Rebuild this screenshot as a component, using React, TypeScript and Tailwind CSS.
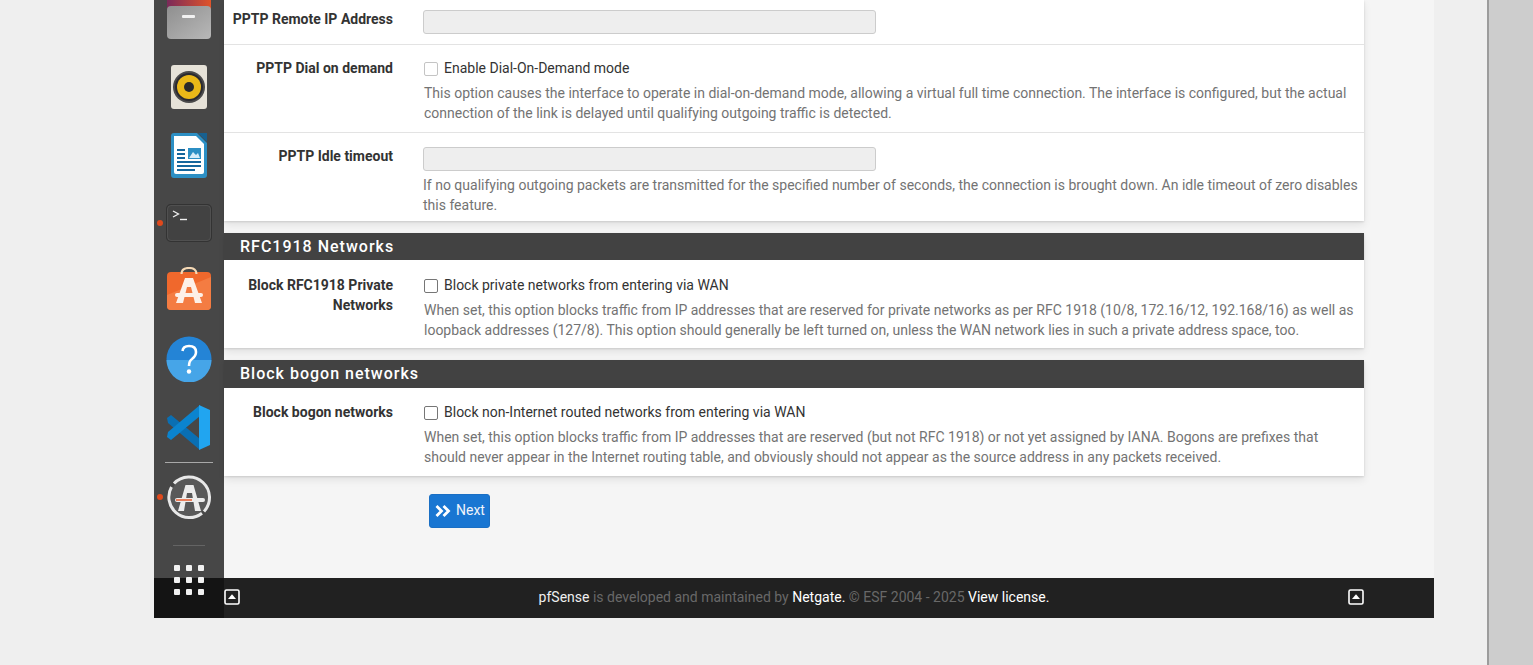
const F = "[font-family:Roboto,'Liberation_Sans',sans-serif]";
const PANEL = "bg-white shadow-[0_4px_8px_rgba(0,0,0,0.08),0_1px_2px_rgba(0,0,0,0.12)]";

function Row({ label, children, lp = "pt-[13px]", last }: { label: React.ReactNode; children: React.ReactNode; lp?: string; last?: boolean }) {
  return (
    <div className={`flex ${last ? "" : "border-b border-[#e3e3e3]"}`}>
      <div className={`w-[169px] shrink-0 text-right font-bold text-[#333] text-[14px] leading-[20px] ${lp}`}>{label}</div>
      <div className="ml-[30px] w-[935px]">{children}</div>
    </div>
  );
}

function Check({ label, dim }: { label: string; dim?: boolean }) {
  return (
    <div className="flex items-center h-[20px]">
      <span className={`w-[14px] h-[14px] rounded-[2px] border bg-white ml-px mt-[2px] ${dim ? "border-[#c4c4c4]" : "border-[#767676]"}`} />
      <span className="ml-[6px] text-[#333]">{label}</span>
    </div>
  );
}

function Help({ children }: { children: React.ReactNode }) {
  return <p className="mt-[5px] ml-px text-[#737373] text-[14px] leading-[20px]">{children}</p>;
}

function Disabled() {
  return <div className="w-[453px] h-[24px] bg-[#eeeeee] border border-[#cccccc] rounded-[3px]" />;
}

function Heading({ children, h }: { children: React.ReactNode; h: string }) {
  return <div className={`${h} bg-[#424242] text-white font-medium text-[16px] leading-[27px] tracking-[1px] pl-[16px]`}>{children}</div>;
}

function UpIcon() {
  return (
    <svg width="16" height="16" viewBox="0 0 16 16" className="mb-[2px]">
      <rect x="1" y="1" width="14" height="14" rx="1.5" fill="none" stroke="#fff" strokeWidth="1.6" />
      <path d="M8 5.2 L12 10 H4 Z" fill="#fff" />
    </svg>
  );
}

function Dock() {
  return (
    <div className="absolute left-0 top-0 bottom-0 w-[70px] bg-[rgba(17,17,17,0.763)] overflow-hidden">
      <svg className="absolute left-[13px] top-[-10px]" width="45" height="50" viewBox="0 0 45 50">
        <defs>
          <linearGradient id="fd" x1="0" y1="0" x2="1" y2="1"><stop offset="0" stopColor="#8f8f8f" /><stop offset="1" stopColor="#b8b8b8" /></linearGradient>
          <linearGradient id="ft" x1="0" y1="0" x2="1" y2="0"><stop offset="0" stopColor="#7a2a5a" /><stop offset="1" stopColor="#e0542a" /></linearGradient>
        </defs>
        <path d="M0 4 q0 -3 3 -3 H20 l5 5 H42 q2 0 2 3 V25 H0 Z" fill="url(#ft)" />
        <rect x="0" y="16" width="44" height="33" rx="4" fill="url(#fd)" />
        <rect x="15" y="25" width="13" height="3" rx="1" fill="#f1f1f1" />
      </svg>
      <svg className="absolute left-[17px] top-[65px]" width="36" height="44" viewBox="0 0 36 44">
        <rect width="36" height="44" rx="3" fill="#e6e2d8" />
        <circle cx="18" cy="22" r="16" fill="#4a4a4a" />
        <circle cx="18" cy="22" r="14" fill="#2a2a30" />
        <circle cx="18" cy="22" r="12" fill="#eab818" />
        <circle cx="18" cy="22" r="5" fill="#2a2a2a" />
      </svg>
      <svg className="absolute left-[17px] top-[133px]" width="36" height="45" viewBox="0 0 36 45">
        <path d="M3 0 H26 L36 10 V42 q0 3 -3 3 H3 q-3 0 -3 -3 V3 q0 -3 3 -3 Z" fill="#2c8fc4" />
        <path d="M3 3 H25 L33 11 V39 q0 2 -2 2 H5 q-2 0 -2 -2 Z" fill="#ffffff" />
        <path d="M27 0 H36 V9 Z" fill="#17608f" />
        <path d="M6 16 h8 v2 h-8 z M6 20 h8 v2 h-8 z M6 24 h8 v2 h-8 z M6 28 h24 v2 h-24 z M6 32 h24 v2 h-24 z M6 36 h18 v2 h-18 z" fill="#15669c" />
        <rect x="17" y="15" width="13" height="11" fill="#2c8fc4" />
        <path d="M18 25 l4 -6 3 3 2 -2 2 5 Z" fill="#d6ecf8" />
      </svg>
      <svg className="absolute left-[12px] top-[204px]" width="46" height="38" viewBox="0 0 46 38">
        <rect x="0.75" y="0.75" width="44.5" height="36.5" rx="4" fill="#424242" stroke="#333333" strokeWidth="1.5" />
        <rect x="1.5" y="1.5" width="43" height="35" rx="3.5" fill="none" stroke="#5a5a5a" strokeWidth="0.7" />
        <path d="M7 7 L12.5 10 L7 13" fill="none" stroke="#f0f0f0" strokeWidth="1.3" />
        <path d="M14 15.5 H21" stroke="#f0f0f0" strokeWidth="1.4" />
      </svg>
      <div className="absolute left-[3px] top-[220px] w-[6px] h-[6px] rounded-full bg-[#e0491c]" />
      <svg className="absolute left-[13px] top-[267px]" width="45" height="44" viewBox="0 0 45 44">
        <rect x="0" y="5" width="44" height="38" rx="4" fill="#f0682c" />
        <path d="M0 28 L44 10 V39 q0 4 -4 4 H4 q-4 0 -4 -4 Z" fill="#f47c42" />
        <path d="M14.5 7 Q14.5 1 22 1 Q29.5 1 29.5 7" fill="none" stroke="#f5d9b5" strokeWidth="2.2" />
        <path d="M18 11 H26 L35 36 H28 L24 20 H20 L16 36 H9 Z" fill="#fdf0e8" />
        <rect x="8" y="26" width="28" height="4" rx="2" fill="#fdf0e8" />
      </svg>
      <svg className="absolute left-[12px] top-[336px]" width="46" height="46" viewBox="0 0 46 46">
        <circle cx="23" cy="23" r="22.5" fill="#2484d6" />
        <path d="M0.5 24 a22.5 22.5 0 0 0 45 0 Z" fill="#46a5e8" />
        <path d="M16.5 15 Q17 10 23 10 Q30 10 30 16 Q30 20 26 23 Q23 25 23 30" fill="none" stroke="#fff" strokeWidth="2.6" />
        <circle cx="23" cy="35.5" r="2.2" fill="#fff" />
      </svg>
      <svg className="absolute left-[13px] top-[405px]" width="44" height="45" viewBox="0 0 44 45">
        <path d="M0 13 L4 10 L33 34 V45 L1 18 Z" fill="#0a6fb3" />
        <path d="M0 32 L4 35 L33 11 V0 L1 27 Z" fill="#0b84cf" />
        <path d="M32 0 L43 5 V40 L32 45 Z" fill="#21a5f0" />
      </svg>
      <div className="absolute left-[11px] top-[462px] w-[48px] h-px bg-[#a8a8a8]" />
      <svg className="absolute left-[12px] top-[475px]" width="46" height="46" viewBox="0 0 46 46">
        <circle cx="23.5" cy="22" r="19" fill="#595959" />
        <path d="M8 8.5 A20.5 20.5 0 1 1 38 36.5 M36 38.2 A20.5 20.5 0 0 1 5.5 12" fill="none" stroke="#e8e8e8" strokeWidth="3" />
        <path d="M19.5 10 H27.5 L35 36 H29 L26 18 H21 L18 36 H12 Z" fill="#ececec" />
        <rect x="9" y="23" width="30" height="4" rx="2" fill="#ececec" />
        <rect x="10" y="24.3" width="16" height="1.4" fill="#e9501f" />
      </svg>
      <div className="absolute left-[3px] top-[494px] w-[6px] h-[6px] rounded-full bg-[#e0491c]" />
      <div className="absolute left-[19px] top-[545px] w-[32px] h-px bg-[#646464]" />
      <div className="absolute left-[20px] top-[565px] grid grid-cols-3 gap-[6px]">
        {Array.from({ length: 9 }).map((_, i) => (
          <span key={i} className="w-[6px] h-[6px] rounded-[1px] bg-[#f1f1f1]" />
        ))}
      </div>
    </div>
  );
}

export default function App() {
  return (
    <div className={`${F} h-[665px] overflow-hidden bg-[#efefef] flex text-[14px] leading-[20px]`}>
      <div className="relative w-[1280px] ml-[154px] h-[618px] flex flex-col bg-[#f5f5f5]">
        <div className="flex-1 pl-[70px] pr-[70px] min-h-0">
          <div className={PANEL}>
            <Row label="PPTP Remote IP Address" lp="pt-[9px]">
              <div className="pt-[10px] pb-[10px]"><Disabled /></div>
            </Row>
            <Row label="PPTP Dial on demand">
              <div className="pt-[13px] pb-[9px]">
                <Check label="Enable Dial-On-Demand mode" dim />
                <Help>This option causes the interface to operate in dial-on-demand mode, allowing a virtual full time connection. The interface is configured, but the actual connection of the link is delayed until qualifying outgoing traffic is detected.</Help>
              </div>
            </Row>
            <Row label="PPTP Idle timeout" last>
              <div className="pt-[14px] pb-[6px]">
                <Disabled />
                <p className="mt-[4px] text-[#737373]">If no qualifying outgoing packets are transmitted for the specified number of seconds, the connection is brought down. An idle timeout of zero disables this feature.</p>
              </div>
            </Row>
          </div>

          <div className={`mt-[12px] ${PANEL}`}>
            <Heading h="h-[27px]">RFC1918 Networks</Heading>
            <div className="pt-px">
              <Row label={<>Block RFC1918 Private<br />Networks</>} lp="pt-[14px]" last>
                <div className="pt-[14px] pb-[8px]">
                  <Check label="Block private networks from entering via WAN" />
                  <Help>When set, this option blocks traffic from IP addresses that are reserved for private networks as per RFC 1918 (10/8, 172.16/12, 192.168/16) as well as loopback addresses (127/8). This option should generally be left turned on, unless the WAN network lies in such a private address space, too.</Help>
                </div>
              </Row>
            </div>
          </div>

          <div className={`mt-[12px] ${PANEL}`}>
            <Heading h="h-[28px]">Block bogon networks</Heading>
            <Row label="Block bogon networks" lp="pt-[14px]" last>
              <div className="pt-[14px] pb-[9px]">
                <Check label="Block non-Internet routed networks from entering via WAN" />
                <Help>When set, this option blocks traffic from IP addresses that are reserved (but not RFC 1918) or not yet assigned by IANA. Bogons are prefixes that should never appear in the Internet routing table, and obviously should not appear as the source address in any packets received.</Help>
              </div>
            </Row>
          </div>

          <button className="mt-[18px] ml-[205px] w-[61px] h-[34px] bg-[#1976d2] border border-[#1a6fc4] rounded-[3px] flex items-center pl-[5px] pb-[2px] text-[#f0f4fa]">
            <svg width="16" height="14" viewBox="0 0 16 14" fill="none" stroke="#fff" strokeWidth="2.8" className="mt-[2px]">
              <path d="M1.5 2 L6.5 7 L1.5 12 M8.5 2 L13.5 7 L8.5 12" />
            </svg>
            <span className="ml-[5px]">Next</span>
          </button>
        </div>
        <div className="h-[40px] shrink-0 bg-[#212121] flex items-center pl-[70px] pr-[70px]">
          <UpIcon />
          <div className="flex-1 text-center text-[#686868] pb-[2px]">
            <span className="text-[#eeeeee]">pfSense</span> is developed and maintained by <span className="text-[#ffffff]">Netgate.</span> © ESF 2004 - 2025 <span className="text-[#ffffff]">View license.</span>
          </div>
          <UpIcon />
        </div>
        <Dock />
      </div>
      <div className="ml-[53px] w-[2px] h-full bg-[#9c9c9c]" />
      <div className="flex-1 h-full bg-[#cdcdcd]" />
    </div>
  );
}
